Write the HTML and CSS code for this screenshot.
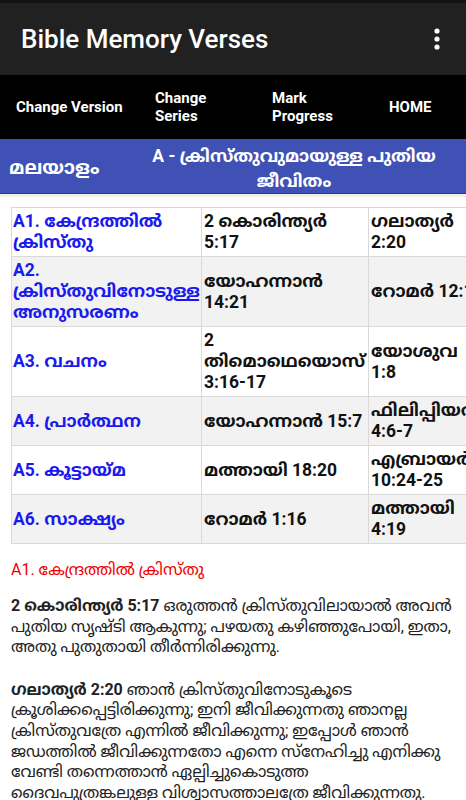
FILE: index.html
```html
<!DOCTYPE html>
<html lang="ml">
<head>
  <meta charset="UTF-8" />
  <meta name="viewport" content="width=device-width, initial-scale=1.0"/>
  <title>Bible Memory Verses</title>
  <link rel="stylesheet" href="styles.css">
</head>
<body>

  <div class="status-bar"></div>

  <header class="app-bar">
    <h1>Bible Memory Verses</h1>
    <svg class="overflow" width="6" height="22" viewBox="0 0 6 22">
      <circle cx="3" cy="3" r="2.6" fill="#fff"/>
      <circle cx="3" cy="11" r="2.6" fill="#fff"/>
      <circle cx="3" cy="19" r="2.6" fill="#fff"/>
    </svg>
  </header>

  <nav class="menu">
    <a class="menu-item item-version">Change Version</a>
    <a class="menu-item item-series">Change<br>Series</a>
    <a class="menu-item item-progress">Mark<br>Progress</a>
    <a class="menu-item item-home">HOME</a>
  </nav>

  <div class="series-bar">
    <span class="language">മലയാളം</span>
    <span class="series-title">A - ക്രിസ്തുവുമായുള്ള പുതിയ ജീവിതം</span>
  </div>

  <div class="content">
    <table class="verses">
      <colgroup>
        <col class="col-topic">
        <col class="col-verse">
        <col class="col-verse2">
      </colgroup>
      <tr>
        <td class="topic"><a>A1. കേന്ദ്രത്തിൽ ക്രിസ്തു</a></td>
        <td>2 കൊരിന്ത്യർ 5:17</td>
        <td>ഗലാത്യർ 2:20</td>
      </tr>
      <tr>
        <td class="topic"><a>A2. ക്രിസ്തുവിനോടുള്ള അനുസരണം</a></td>
        <td>യോഹന്നാൻ 14:21</td>
        <td>റോമർ&nbsp;12:1</td>
      </tr>
      <tr>
        <td class="topic"><a>A3. വചനം</a></td>
        <td>2 തിമൊഥെയൊസ് 3:16-17</td>
        <td>യോശുവ 1:8</td>
      </tr>
      <tr>
        <td class="topic"><a>A4. പ്രാർത്ഥന</a></td>
        <td>യോഹന്നാൻ 15:7</td>
        <td>ഫിലിപ്പിയർ 4:6-7</td>
      </tr>
      <tr>
        <td class="topic"><a>A5. കൂട്ടായ്മ</a></td>
        <td>മത്തായി 18:20</td>
        <td>എബ്രായർ 10:24-25</td>
      </tr>
      <tr>
        <td class="topic"><a>A6. സാക്ഷ്യം</a></td>
        <td>റോമർ 1:16</td>
        <td>മത്തായി 4:19</td>
      </tr>
    </table>

    <h3 class="topic-heading">A1. കേന്ദ്രത്തിൽ ക്രിസ്തു</h3>

    <p class="verse"><strong>2 കൊരിന്ത്യർ 5:17</strong> ഒരുത്തൻ ക്രിസ്തുവിലായാൽ അവൻ പുതിയ സൃഷ്ടി ആകുന്നു; പഴയതു കഴിഞ്ഞുപോയി, ഇതാ, അതു പുതുതായി തീർന്നിരിക്കുന്നു.</p>

    <p class="verse"><strong>ഗലാത്യർ 2:20</strong> ഞാൻ ക്രിസ്തുവിനോടുകൂടെ ക്രൂശിക്കപ്പെട്ടിരിക്കുന്നു; ഇനി ജീവിക്കുന്നതു ഞാനല്ല ക്രിസ്തുവത്രേ എന്നിൽ ജീവിക്കുന്നു; ഇപ്പോൾ ഞാൻ ജഡത്തിൽ ജീവിക്കുന്നതോ എന്നെ സ്നേഹിച്ചു എനിക്കു വേണ്ടി തന്നെത്താൻ ഏല്പിച്ചുകൊടുത്ത ദൈവപുത്രങ്കലുള്ള വിശ്വാസത്താലത്രേ ജീവിക്കുന്നതു.</p>
  </div>

</body>
</html>
```

FILE: styles.css
```css
body {
  margin: 0;
  font-family: Roboto, "Noto Sans", "Noto Sans Malayalam", sans-serif;
  background: #fff;
  color: #212121;
  overflow-x: hidden;
}

.status-bar {
  height: 3px;
  background: #141414;
}

.app-bar {
  height: 72px;
  background: #212121;
  display: flex;
  align-items: center;
  justify-content: space-between;
  padding: 0 26px 0 21px;
}

.app-bar h1 {
  margin: 0;
  color: #fff;
  font-size: 26px;
  font-weight: 500;
}

.menu {
  height: 64px;
  background: #000;
  display: flex;
  align-items: center;
}

.menu-item {
  color: #fff;
  font-size: 15px;
  font-weight: bold;
  line-height: 18px;
}

.item-version { margin-left: 16px; width: 139px; }
.item-series { width: 117px; }
.item-progress { width: 117px; }

.series-bar {
  height: 49px;
  padding-top: 5px;
  background: #3f51b5;
  border-bottom: 1px solid #2639a0;
  display: flex;
  align-items: center;
  color: #fff;
  font-weight: bold;
}

.language {
  margin-left: 9px;
  width: 142px;
  font-size: 19px;
}

.series-title {
  width: 286px;
  text-align: center;
  font-size: 17.5px;
  line-height: 25px;
}

.content {
  border-top: 3px solid #eeeeee;
  padding: 10px 11px;
}

.verses {
  border-collapse: collapse;
  table-layout: fixed;
  width: 457px;
}

.col-topic { width: 190px; }
.col-verse { width: 167px; }

.verses td {
  border: 1px solid #d9d9d9;
  padding: 3px 1px 3px 1px;
  font-size: 17.5px;
  font-weight: bold;
  line-height: 21px;
  color: #111;
  vertical-align: middle;
  overflow: hidden;
}

.verses td + td {
  padding-left: 2px;
  padding-right: 5px;
}

.verses tr:nth-child(even) td {
  background: #f2f2f2;
}

.topic a {
  color: #1a1aee;
  text-decoration: none;
}

.topic-heading {
  margin: 16px 0 15px;
  color: #f00000;
  font-size: 16px;
  font-weight: normal;
}

.verse {
  margin: 0 0 22px;
  font-size: 16px;
  line-height: 20.6px;
  color: #222;
}
```
